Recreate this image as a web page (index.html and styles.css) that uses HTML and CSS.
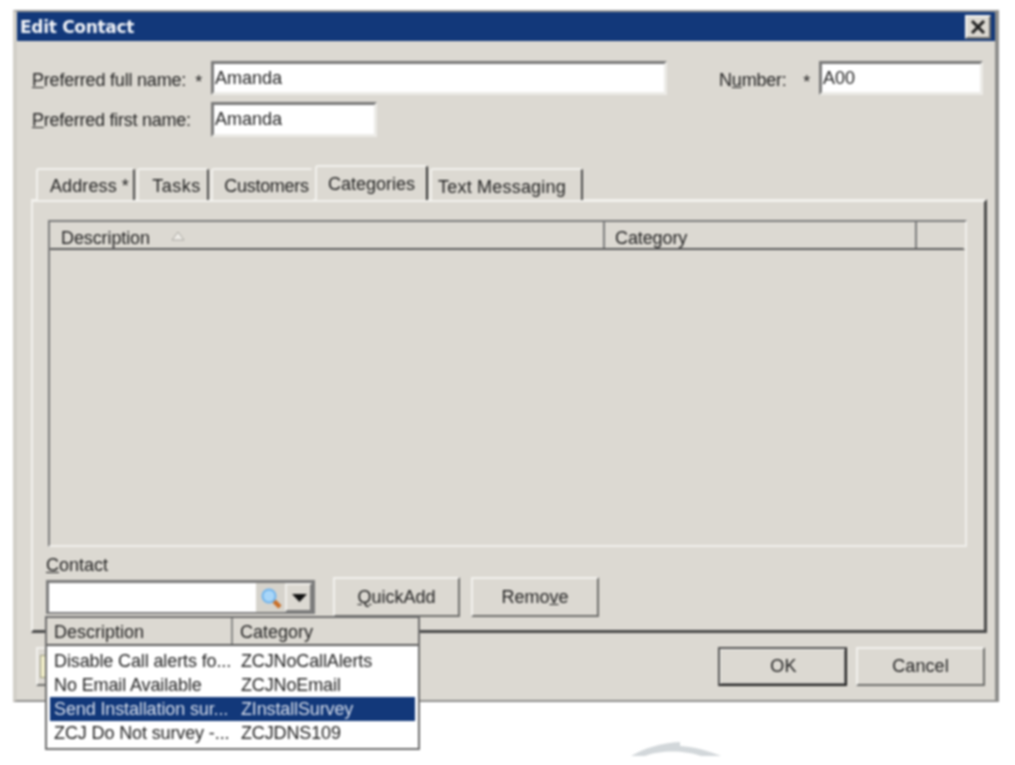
FILE: index.html
```html
<!DOCTYPE html>
<html lang="en">
<head>
<meta charset="utf-8">
<title>Edit Contact</title>
<link rel="stylesheet" href="styles.css">
</head>
<body>
<div class="scene">
  <div class="window">
    <div class="titlebar">
      <span class="title">Edit Contact</span>
      <div class="close"><svg width="16" height="14" viewBox="0 0 16 14"><path d="M2 1 L14 13 M14 1 L2 13" stroke="#222" stroke-width="3"/></svg></div>
    </div>
    <div class="form-row first">
      <div class="label"><span><u>P</u>referred full name:</span><span class="star">*</span></div>
      <div class="field full">Amanda</div>
      <div class="label number"><span>N<u>u</u>mber:</span><span class="star">*</span></div>
      <div class="field num">A00</div>
    </div>
    <div class="form-row second">
      <div class="label tight"><span><u>P</u>referred first name:</span></div>
      <div class="field short">Amanda</div>
    </div>
    <div class="tabs">
      <div class="tab t1">Address *</div>
      <div class="tab t2">Tasks</div>
      <div class="tab t3">Customers</div>
      <div class="tab t4 active">Categories</div>
      <div class="tab t5">Text Messaging</div>
    </div>
    <div class="panel">
      <div class="table">
        <div class="thead">
          <div class="th c1">Description
            <svg class="sort" width="14" height="10" viewBox="0 0 14 10"><path d="M7 1 L13 9 L1 9 Z" fill="#eeece7" stroke="#a8a6a0"/></svg>
          </div>
          <div class="th c2">Category</div>
          <div class="th c3"></div>
        </div>
      </div>
      <div class="contact-label"><u>C</u>ontact</div>
      <div class="contact-row">
        <div class="combo">
          <div class="combo-input"></div>
          <div class="search-btn">
            <svg width="24" height="24" viewBox="0 0 24 24"><path d="M15 15 L21 21" stroke="#c96f28" stroke-width="4.5"/><circle cx="10" cy="10" r="6.5" fill="#a9d6f8" stroke="#6fb4ee" stroke-width="2"/></svg>
          </div>
          <div class="arrow-btn">
            <svg width="15" height="8" viewBox="0 0 15 8"><path d="M0 0 H15 L7.5 8 Z" fill="#111"/></svg>
          </div>
        </div>
        <div class="btn quick"><span><u>Q</u>uickAdd</span></div>
        <div class="btn remove"><span>Remo<u>v</u>e</span></div>
      </div>
    </div>
    <div class="footer">
      <div class="btn hidden-btn"><div class="note"></div></div>
      <div class="btn ok"><span>OK</span></div>
      <div class="btn cancel"><span>Cancel</span></div>
    </div>
    <div class="dropdown">
      <div class="dd-head">
        <div class="dd-h1">Description</div>
        <div class="dd-h2">Category</div>
      </div>
      <div class="dd-body">
        <div class="dd-row"><div class="d1">Disable Call alerts fo...</div><div class="d2">ZCJNoCallAlerts</div></div>
        <div class="dd-row"><div class="d1">No Email Available</div><div class="d2">ZCJNoEmail</div></div>
        <div class="dd-row selected"><div class="d1">Send Installation sur...</div><div class="d2">ZInstallSurvey</div></div>
        <div class="dd-row"><div class="d1">ZCJ Do Not survey -...</div><div class="d2">ZCJDNS109</div></div>
      </div>
    </div>
  </div>
  <svg class="arc" width="92" height="16" viewBox="0 0 92 16"><path d="M0 15 C14 7 30 2 49 1 L49 5 C64 6 78 10 90 15 L70 15 C54 9 28 9 14 15 Z" fill="#d2d7da"/></svg>
</div>
</body>
</html>
```

FILE: styles.css
```css
* { box-sizing: border-box; }
html, body { margin: 0; padding: 0; background: #fff; }
body { width: 1015px; height: 765px; overflow: hidden; font-family: "Liberation Sans", Arial, sans-serif; font-size: 18px; color: #222; }
.scene { position: relative; width: 1015px; height: 765px; padding: 10px 0 0 13px; filter: blur(0.8px); }
.window { position: relative; width: 986px; height: 692px; background: #dcd9d2; border-style: solid; border-width: 2px 4px 2px 4px; border-color: #9a9a98 #8e8e8c #8e8e8c #d2cfc8; }
.titlebar { height: 29px; background: #12387a; display: flex; align-items: center; justify-content: space-between; padding: 0 4px 0 3px; }
.title { color: #f2f4f8; font-family: "DejaVu Sans", sans-serif; font-weight: 700; font-size: 17px; letter-spacing: -0.3px; }
.close { width: 26px; height: 24px; background: #dcd9d2; border: 2px solid; border-color: #f4f3f0 #6e6e6c #6e6e6c #f4f3f0; display: flex; align-items: center; justify-content: center; }
.form-row { display: flex; align-items: center; padding-left: 15px; }
.first { margin-top: 20px; height: 34px; }
.second { margin-top: 7px; height: 35px; }
.label { width: 179px; display: flex; justify-content: space-between; padding-right: 9px; padding-top: 5px; letter-spacing: -0.2px; }
.label.tight { padding-top: 1px; letter-spacing: -0.25px; }
.star { font-size: 18px; line-height: 1; padding-top: 3px; }
.label.number { width: 100px; margin-left: 52px; }
.field { height: 100%; background: #fff; border: 3px solid; border-color: #7a7a7a #ecebe7 #ecebe7 #7a7a7a; padding: 2px 0 0 1px; line-height: 25px; }
.full { width: 456px; }
.num { width: 164px; }
.short { width: 166px; }
.tabs { display: flex; align-items: flex-end; gap: 2px; margin: 28px 0 0 19px; height: 35px; position: relative; z-index: 1; }
.tab { height: 32px; background: #dcd9d2; border: 2px solid; border-color: #f2f1ed #4c4c4c transparent #f2f1ed; border-bottom: 0; border-radius: 3px 3px 0 0; text-align: center; line-height: 33px; }
.tab.active { height: 35px; line-height: 34px; border-color: #f2f1ed #333 transparent #f2f1ed; }
.t1 { width: 99px; padding-left: 8px; letter-spacing: 0.1px; }
.t2 { width: 72px; padding-left: 7px; letter-spacing: 0.5px; }
.t3 { width: 102px; padding-left: 9px; letter-spacing: -0.3px; border-right-color: transparent; }
.t4 { width: 113px; }
.t5 { width: 153px; padding-right: 9px; letter-spacing: 0.2px; line-height: 34px; }
.panel { width: 956px; height: 434px; margin: -1px 0 0 14px; border: 2px solid; border-width: 3px 3px 3px 2px; border-color: #f2f1ed #4a4a4a #4a4a4a #f2f1ed; padding: 18px 0 0 15px; }
.table { width: 919px; height: 327px; border: 2px solid; border-color: #7c7c7c #f0efeb #f0efeb #7c7c7c; }
.thead { display: flex; height: 28px; border-bottom: 2px solid #5c5c5c; border-right: 2px solid transparent; }
.th { height: 100%; padding-left: 11px; line-height: 32px; border-right: 2px solid #7c7c7c; letter-spacing: -0.1px; }
.c1 { width: 555px; position: relative; }
.c2 { width: 312px; padding-left: 10px; }
.c3 { flex: 1; border-right: 0; }
.sort { position: absolute; left: 121px; top: 9px; }
.contact-label { margin-top: 7px; height: 23px; line-height: 22px; margin-left: -2px; }
.contact-row { display: flex; margin-left: -2px; margin-top: 0; align-items: flex-start; }
.combo { width: 269px; height: 34px; margin-top: 3px; display: flex; border: 3px solid #7c7c7c; border-right-width: 3px; border-bottom-width: 2px; background: #dcd9d2; }
.combo-input { flex: 1; background: #fff; }
.search-btn { width: 29px; display: flex; align-items: center; justify-content: center; background: #d6d3cc; }
.arrow-btn { width: 27px; padding-left: 2px; display: flex; align-items: center; justify-content: center; background: #dcd9d2; border: 2px solid; border-color: #f0efeb #7c7c7c #7c7c7c #f0efeb; }
.btn { height: 40px; display: flex; align-items: center; justify-content: center; border: 2px solid; border-color: #f2f1ed #6e6e6c #6e6e6c #f2f1ed; background: #dcd9d2; }
.quick { width: 127px; margin-left: 18px; }
.remove { width: 128px; margin-left: 11px; }
.footer { display: flex; align-items: flex-start; margin: 14px 0 0 19px; width: 949px; }
.footer .btn { height: 39px; }
.hidden-btn { width: 100px; justify-content: flex-start; padding-left: 2px; margin-right: auto; }
.note { width: 9px; height: 23px; background: #f1eecb; border: 1px solid #9a9a7c; }
.ok { width: 129px; border-color: #555 #222 #222 #555 !important; box-shadow: inset 1px 1px 0 #f2f1ed, inset -1px -1px 0 #8a8a88; letter-spacing: 0.2px; padding-left: 2px; }
.cancel { width: 129px; margin-left: 9px; letter-spacing: 0.1px; }
.dropdown { position: absolute; left: 28px; top: 604px; width: 375px; height: 134px; z-index: 3; background: #fff; border: 2px solid #6c6c6c; }
.dd-head { display: flex; height: 28px; background: #dcd9d2; border-bottom: 2px solid #5c5c5c; line-height: 29px; }
.dd-h1 { width: 186px; padding-left: 7px; border-right: 2px solid #8a8a88; }
.dd-h2 { padding-left: 7px; }
.dd-body { padding: 3px 3px 0; }
.dd-row { display: flex; height: 24px; line-height: 24px; }
.selected { background: #12387a; color: #d8dfec; }
.d1 { width: 191px; padding-left: 4px; white-space: nowrap; letter-spacing: -0.12px; }
.d2 { white-space: nowrap; letter-spacing: -0.13px; }
.arc { position: absolute; left: 631px; top: 741px; }
```
